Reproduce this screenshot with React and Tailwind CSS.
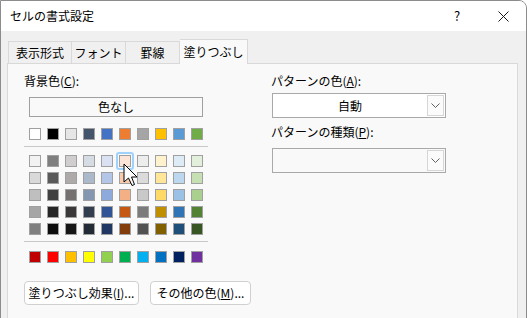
import React from "react";

const FONT = { fontFamily: '"Noto Sans CJK JP", "Noto Sans", sans-serif' };

const top = ["#ffffff", "#000000", "#e7e6e6", "#44546a", "#4472c4", "#ed7d31", "#a5a5a5", "#ffc000", "#5b9bd5", "#70ad47"];
const theme = [
  ["#f2f2f2", "#7f7f7f", "#d0cece", "#d6dce4", "#d9e1f2", "#fce4d6", "#ededed", "#fff2cc", "#ddebf7", "#e2efda"],
  ["#d9d9d9", "#595959", "#aeaaaa", "#acb9ca", "#b4c6e7", "#f8cbad", "#dbdbdb", "#ffe699", "#bdd7ee", "#c6e0b4"],
  ["#bfbfbf", "#404040", "#757171", "#8497b0", "#8ea9db", "#f4b084", "#c9c9c9", "#ffd966", "#9bc2e6", "#a9d08e"],
  ["#a6a6a6", "#262626", "#3a3838", "#333f4f", "#305496", "#c65911", "#7b7b7b", "#bf8f00", "#2f75b5", "#548235"],
  ["#808080", "#0d0d0d", "#161616", "#222b35", "#203764", "#833c0c", "#525252", "#806000", "#1f4e78", "#375623"],
];
const standard = ["#c00000", "#ff0000", "#ffc000", "#ffff00", "#92d050", "#00b050", "#00b0f0", "#0070c0", "#002060", "#7030a0"];

function Swatch({ color, selected }) {
  return (
    <div className="relative w-[12px] h-[12px]">
      {selected && (
        <div className="absolute -left-[3px] -top-[3px] w-[18px] h-[18px] rounded-[3px] border-2 border-[#9fd2fb]" />
      )}
      <div className="w-[12px] h-[12px] border border-[#a0a0a0]" style={{ backgroundColor: color }} />
    </div>
  );
}

function Row({ colors, selectedIndex }) {
  return (
    <div className="flex gap-[6px]">
      {colors.map((c, i) => (
        <Swatch key={i} color={c} selected={i === selectedIndex} />
      ))}
    </div>
  );
}

function Chevron() {
  return (
    <svg width="9" height="6" viewBox="0 0 9 6">
      <path d="M0.5 0.5 L4.5 4.5 L8.5 0.5" fill="none" stroke="#606060" strokeWidth="1" />
    </svg>
  );
}

function Dropdown({ value, disabled }) {
  return (
    <div className={`flex h-[25px] w-[174px] border border-[#a9a9a9] ${disabled ? "bg-[#f9f9f9]" : "bg-white"}`}>
      <div className="flex-1 flex items-center justify-center text-[12px] text-black">{value}</div>
      <div className="w-[17px] my-[1px] mr-[1px] border border-[#d6d6d6] flex items-center justify-center bg-[#fbfbfb]">
        <Chevron />
      </div>
    </div>
  );
}

export default function App() {
  return (
    <div className="w-[527px] h-[318px] bg-white overflow-hidden" style={FONT}>
      <div className="relative w-[527px] h-[330px] border border-[#8c8c8c] rounded-tr-[8px] bg-[#f0f0f0] overflow-hidden">
        {/* Title bar */}
        <div className="h-[30px] bg-white flex items-center pl-[9px] text-[12px] text-black">
          <span className="flex-1">セルの書式設定</span>
          <span className="w-[46px] text-center text-[13px]">?</span>
          <span className="w-[46px] flex justify-center">
            <svg width="11" height="11" viewBox="0 0 11 11">
              <path d="M0.5 0.5 L10.5 10.5 M10.5 0.5 L0.5 10.5" stroke="#1a1a1a" strokeWidth="1" />
            </svg>
          </span>
        </div>
        {/* Tabs */}
        <div className="flex items-end h-[32px] pl-[7px] text-[12px] text-black">
          <div className="w-[64px] h-[22px] border border-b-0 border-[#d9d9d9] flex items-center justify-center">表示形式</div>
          <div className="w-[54px] h-[22px] border border-b-0 border-l-0 border-[#d9d9d9] flex items-center justify-center">フォント</div>
          <div className="w-[54px] h-[22px] border border-b-0 border-l-0 border-[#d9d9d9] flex items-center justify-center">罫線</div>
          <div className="relative z-10 w-[68px] h-[25px] -mb-[1px] border border-b-0 border-l-0 border-[#d9d9d9] bg-[#f9f9f9] flex items-center justify-center">塗りつぶし</div>
        </div>
        {/* Panel */}
        <div className="ml-[6px] w-[511px] h-[270px] border border-[#d9d9d9] bg-[#f9f9f9] flex pl-[16px] pt-[9px] text-[12px] text-black">
          {/* Left column */}
          <div className="w-[184px] flex flex-col">
            <div className="h-[16px] leading-[16px]">
              背景色(<span className="underline">C</span>):
            </div>
            <div className="mt-[8px] ml-[5px] w-[174px] h-[20px] border border-[#a0a0a0] bg-[#f9f9f9] flex items-center justify-center">
              色なし
            </div>
            <div className="mt-[11px] ml-[5px]">
              <Row colors={top} />
            </div>
            <div className="mt-[6px] h-[1px] w-[184px] bg-[#c8c8c8]" />
            <div className="mt-[8px] ml-[5px] flex flex-col gap-[5px]">
              {theme.map((r, i) => (
                <Row key={i} colors={r} selectedIndex={i === 0 ? 5 : -1} />
              ))}
            </div>
            <div className="mt-[6px] h-[1px] w-[184px] bg-[#c8c8c8]" />
            <div className="mt-[9px] ml-[5px]">
              <Row colors={standard} />
            </div>
            <div className="mt-[18px] flex gap-[11px]">
              <div className="w-[115px] h-[24px] shrink-0 rounded-[4px] border border-[#d0d0d0] bg-white flex items-center justify-center whitespace-nowrap">
                塗りつぶし効果(<span className="underline">I</span>)...
              </div>
              <div className="w-[101px] h-[24px] shrink-0 rounded-[4px] border border-[#d0d0d0] bg-white flex items-center justify-center whitespace-nowrap">
                その他の色(<span className="underline">M</span>)...
              </div>
            </div>
          </div>
          {/* Right column */}
          <div className="ml-[64px] flex flex-col">
            <div className="h-[16px] leading-[16px] -ml-[1px]">
              パターンの色(<span className="underline">A</span>):
            </div>
            <div className="mt-[4px]">
              <Dropdown value="自動" />
            </div>
            <div className="mt-[6px] h-[16px] leading-[16px] -ml-[1px]">
              パターンの種類(<span className="underline">P</span>):
            </div>
            <div className="mt-[8px]">
              <Dropdown value="" disabled />
            </div>
          </div>
        </div>
        {/* Mouse cursor */}
        <svg className="absolute left-[122px] top-[162px]" width="16" height="25" viewBox="0 0 16 25">
          <path
            d="M1 1 L1 19 L5.5 15 L9 22.5 L11.5 21.5 L8.5 14 L14 14 Z"
            fill="#ffffff"
            stroke="#000000"
            strokeWidth="1"
            strokeLinejoin="round"
          />
        </svg>
      </div>
    </div>
  );
}
